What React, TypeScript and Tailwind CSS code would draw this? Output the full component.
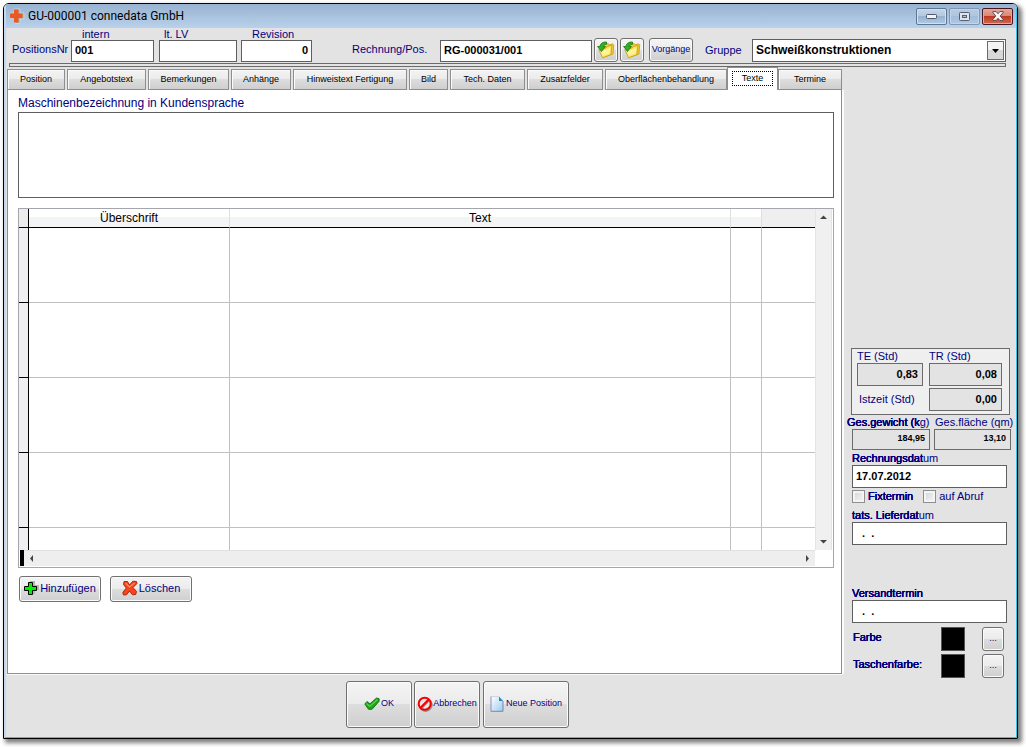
import React from "react";

const FIELD =
  "block rounded-none border border-[#5f5f5f] bg-white px-[3px] font-bold text-black outline-none";
const READONLY =
  "block w-full rounded-none border border-[#6b6b6b] bg-[#e3e3e3] font-bold text-black text-right outline-none";
const LABEL = "whitespace-nowrap text-[11px] text-[#000080]";
const STRONG = "[text-shadow:0_0_0_#000080,0_0_0_#000080,0_0_0_#000080]";
const BUTTON =
  "flex items-center justify-center whitespace-nowrap rounded-[3px] border border-[#707070] bg-[linear-gradient(#f4f4f4_0%,#ebebeb_49%,#dddddd_50%,#cfcfcf_100%)] text-[#000080] shadow-[inset_0_0_0_1px_#fbfbfb]";

const TABS = [
  { name: "Position", size: "w-[58px] mr-[2px]" },
  { name: "Angebotstext", size: "w-[79px] mr-[2px]" },
  { name: "Bemerkungen", size: "w-[81px] mr-[2px]" },
  { name: "Anhänge", size: "w-[60px] mr-[2px]" },
  { name: "Hinweistext Fertigung", size: "w-[114px] mr-[2px]" },
  { name: "Bild", size: "w-[39px] mr-[2px]" },
  { name: "Tech. Daten", size: "w-[75px] mr-[2px]" },
  { name: "Zusatzfelder", size: "w-[76px] mr-[2px]" },
  { name: "Oberflächenbehandlung", size: "w-[122px]" },
  { name: "Texte", size: "w-[51px]", active: true },
  { name: "Termine", size: "w-[64px]" },
];

function AppIcon() {
  return (
    <svg width="16" height="16" viewBox="0 0 16 16" aria-hidden="true">
      <path d="M5 1h6v4h4v6h-4v4.500H6V11H1.500V5H5z" fill="#b3aeab" stroke="#cfd8e2" strokeWidth=".8" />
      <path d="M5 1.500h4.500v4h4V10h-4v4.500H5V10H1V5.500h4z" fill="#ea5a20" />
    </svg>
  );
}

function FolderIcon() {
  return (
    <svg width="18" height="18" viewBox="0 0 18 18" aria-hidden="true">
      <path d="M7 4.500 8 2.500l3.500.3.500 1.200 3.500-1.200 1.200 1-.7 9.200L7 16z" fill="#f0cf3c" stroke="#c8981c" strokeWidth=".8" />
      <path d="M1.800 8.500 9 7l1.200-1.500L15 4.300l-1.200 9.400L5.500 16.800z" fill="#fbe45c" stroke="#c8981c" strokeWidth=".8" />
      <path d="M4 10l9.500-3-.8 5.500-7 2.500z" fill="#fff9b0" opacity=".7" />
      <path d="M9.500 1C6 .8 3.300 2.300 2.800 5.500H.6L4.500 10.500 8.400 5.500H6.300c.3-1.300 1.200-2.200 3.200-2.200z" fill="#35b024" stroke="#16770f" strokeWidth=".8" />
    </svg>
  );
}

function PlusIcon() {
  return (
    <svg width="15" height="15" viewBox="0 0 15 15" aria-hidden="true">
      <path d="M6 0h5v4h4v5h-4v4H6z" fill="#b5b5b5" />
      <path d="M4.500 1.500h4v4h4v4h-4v4h-4v-4h-4v-4h4z" fill="#00f000" stroke="#000" />
    </svg>
  );
}

function CrossIcon() {
  return (
    <svg width="16" height="16" viewBox="0 0 16 16" aria-hidden="true">
      <path
        d="M2 1.500h3.500L7.500 5l3.300-3.800 3.700.3.500 2-4 4 3.500 4-.8 3-3.200.3-3-3.800-3 3.800-3 .2L.8 12.500 4.300 8 1.500 4.500z"
        fill="#f4461c"
        stroke="#a81a08"
        strokeWidth=".9"
      />
      <path d="M3.500 3l4 4 5-4" fill="none" stroke="#ff8a5c" strokeWidth="1.200" />
    </svg>
  );
}

function CheckIcon() {
  return (
    <svg width="16" height="14" viewBox="0 0 16 14" aria-hidden="true">
      <path d="M.8 7 3 4.500l3 2.300L12.500 1l2.700.8-.2 2.700L8 12.300H4.500z" fill="#1fa51a" stroke="#0e7011" strokeWidth=".9" />
      <path d="M2.500 6.500l3.300 2.800L13.500 2.500" fill="none" stroke="#65d64e" strokeWidth="1.100" />
    </svg>
  );
}

function ForbiddenIcon() {
  return (
    <svg width="16" height="16" viewBox="0 0 16 16" aria-hidden="true">
      <circle cx="8.600" cy="8.800" r="6" fill="none" stroke="#8c8c8c" strokeWidth="2.200" />
      <circle cx="7.700" cy="7.700" r="6" fill="#e6e6e6" stroke="#f50000" strokeWidth="2" />
      <path d="m4.600 12.200 7.400-7.600" stroke="#888" strokeWidth="1.800" />
      <path d="m3.800 11.500 7.600-7.700" stroke="#f50000" strokeWidth="2" />
    </svg>
  );
}

function PageIcon() {
  return (
    <svg width="14" height="16" viewBox="0 0 14 16" aria-hidden="true">
      <defs>
        <linearGradient id="sheet" x1="0" y1="0" x2="1" y2="1">
          <stop offset="0" stopColor="#ffffff" />
          <stop offset="1" stopColor="#9ccbec" />
        </linearGradient>
      </defs>
      <path d="M1 .8h8L13 5v10.300H1z" fill="url(#sheet)" />
      <path d="M1 .5v15" stroke="#8d8bd0" />
      <path d="M1 15.300h12V5" fill="none" stroke="#5f86ad" strokeWidth=".9" />
      <path d="M9 .6 13.200 5H9z" fill="#2f86c4" />
      <path d="M1 .6h8" stroke="#b9c8d8" strokeWidth=".7" />
    </svg>
  );
}

function Arrow({ path }: { path: string }) {
  return (
    <svg width="7" height="7" viewBox="0 0 7 7" aria-hidden="true">
      <path d={path} fill="#444" />
    </svg>
  );
}

function TitleBar() {
  const control = "flex h-[17px] w-[31px] items-center justify-center rounded-[2px] border";
  return (
    <header className="flex h-6 items-center bg-[linear-gradient(#98b3d1,#b9d1ea)] pl-[3px] pr-[3px]">
      <AppIcon />
      <h1 className="ml-[3px] flex-1 font-['Roboto',sans-serif] text-[12px] leading-4 text-black">
        GU-000001 connedata GmbH
      </h1>
      <div className="flex gap-[2px]">
        <button
          aria-label="Minimieren"
          className={`${control} border-[#5f7690] bg-[linear-gradient(#c3d5e8_0%,#b3c9e0_49%,#97b2cf_50%,#b0cbe6_100%)] shadow-[inset_0_0_0_1px_#d2e1f0]`}
        >
          <svg width="12" height="6" viewBox="0 0 12 6">
            <rect x=".5" y="1.500" width="10" height="4" rx=".8" fill="#f3f3f3" stroke="#50586a" />
          </svg>
        </button>
        <button
          aria-label="Maximieren"
          className={`${control} border-[#7d97b5] bg-[linear-gradient(#b7cce2_0%,#adc5de_49%,#a2bcd9_50%,#b0cae5_100%)] shadow-[inset_0_0_0_1px_#c2d5e9]`}
        >
          <svg width="11" height="9" viewBox="0 0 11 9">
            <rect x=".5" y=".5" width="10" height="8" rx=".8" fill="#dfe4ea" stroke="#566070" />
            <rect x="3.500" y="3.500" width="4" height="2" fill="#a9c1da" stroke="#566070" />
          </svg>
        </button>
        <button
          aria-label="Schließen"
          className={`${control} border-[#4a1620] bg-[linear-gradient(#e6a597_0%,#d98574_49%,#bd3a22_50%,#cf6a50_100%)] shadow-[inset_0_0_0_1px_#e6a799]`}
        >
          <svg width="12" height="10" viewBox="0 0 12 10">
            <path
              d="M.8.600h3.400L6 2.700 7.800.600h3.400v.9L8.200 5l3 3.500v.9H7.800L6 7.300 4.200 9.400H.8v-.9L3.800 5l-3-3.500z"
              fill="#f4f4f4"
              stroke="#563a45"
              strokeWidth=".9"
            />
          </svg>
        </button>
      </div>
    </header>
  );
}

function HeaderFields() {
  return (
    <div className="flex items-end pb-px pl-[6px] pr-[10px]">
      <span className={`${LABEL} w-[59px] pb-[5px] leading-4`}>PositionsNr</span>
      <div className="mr-[5px] w-[83px]">
        <label htmlFor="intern" className={`${LABEL} block pl-[11px] leading-3`}>intern</label>
        <input id="intern" defaultValue="001" className={`${FIELD} h-[22px] w-full pb-[2px] text-[11px]`} />
      </div>
      <div className="mr-[4px] w-[78px]">
        <label htmlFor="lv" className={`${LABEL} block pl-[5px] leading-3`}>lt. LV</label>
        <input id="lv" className={`${FIELD} h-[22px] w-full pb-[2px] text-[11px]`} />
      </div>
      <div className="w-[71px]">
        <label htmlFor="revision" className={`${LABEL} block pl-[11px] leading-3`}>Revision</label>
        <input id="revision" defaultValue="0" className={`${FIELD} h-[22px] w-full pb-[2px] text-right text-[11px]`} />
      </div>
      <label htmlFor="rechnung" className={`${LABEL} ml-10 w-[88px] pb-[5px] leading-4`}>Rechnung/Pos.</label>
      <input id="rechnung" defaultValue="RG-000031/001" className={`${FIELD} h-[22px] w-[152px] pb-[2px] text-[11px]`} />
      <div className="ml-[2px] flex gap-[2px]">
        <button aria-label="Rechnung öffnen" className={`${BUTTON} h-6 w-6`}><FolderIcon /></button>
        <button aria-label="Position öffnen" className={`${BUTTON} h-6 w-6`}><FolderIcon /></button>
      </div>
      <button className={`${BUTTON} ml-[5px] h-6 w-11 text-[9px]`}>Vorgänge</button>
      <label htmlFor="gruppe" className={`${LABEL} ml-3 w-[47px] pb-1 leading-4`}>Gruppe</label>
      <div className="relative flex-1">
        <select id="gruppe" className={`${FIELD} h-[23px] w-full appearance-none pb-[2px] text-[12px]`}>
          <option>Schweißkonstruktionen</option>
        </select>
        <span className="pointer-events-none absolute bottom-[2px] right-[2px] top-[2px] flex w-[17px] items-center justify-center border border-[#6b6b6b] bg-[linear-gradient(#f4f4f4_50%,#d8d8d8_50%)]">
          <svg width="7" height="4" viewBox="0 0 7 4"><path d="M0 0h7L3.500 4z" fill="#000" /></svg>
        </span>
      </div>
    </div>
  );
}

function TabStrip() {
  return (
    <div role="tablist" className="flex h-[23px] items-end">
      {TABS.map((tab) => (
        <button
          key={tab.name}
          role="tab"
          aria-selected={!!tab.active}
          className={`flex items-center justify-center whitespace-nowrap border border-[#8c8e94] text-[9px] text-black ${tab.size} ${
            tab.active
              ? "h-[23px] border-b-0 bg-white"
              : "h-[21px] bg-[linear-gradient(#f3f3f3_0%,#ebebeb_49%,#dddddd_50%,#cfcfcf_100%)] shadow-[inset_1px_1px_0_#fbfbfb]"
          }`}
        >
          {tab.active ? (
            <span className="mb-px flex h-[15px] w-[41px] items-center justify-center border border-dotted border-black">{tab.name}</span>
          ) : (
            tab.name
          )}
        </button>
      ))}
    </div>
  );
}

const HEAD_CELL =
  "h-[19px] border-b border-r border-b-black border-r-[#dedfe1] bg-[linear-gradient(#ffffff_45%,#f3f4f6_45%)] p-0 text-[12px] font-normal leading-4 text-black";

function TextGrid() {
  const rows = ["h-[75px]", "h-[75px]", "h-[75px]", "h-[75px]", "h-[22px]"];
  return (
    <div className="mt-[10px] border border-[#a5a5ad]">
      <div className="flex">
        <table className="flex-1 table-fixed border-separate border-spacing-0">
          <colgroup>
            <col className="w-[10px]" />
            <col className="w-[201px]" />
            <col />
            <col className="w-[31px]" />
            <col className="w-[53px]" />
          </colgroup>
          <thead>
            <tr>
              <th className="h-[19px] border-b border-r border-black bg-[#ececec] p-0" />
              <th className={HEAD_CELL}>Überschrift</th>
              <th className={HEAD_CELL}>Text</th>
              <th className={HEAD_CELL} />
              <th className="border-b border-black bg-[#efefef] p-0" />
            </tr>
          </thead>
          <tbody>
            {rows.map((height, i) => {
              const last = i === rows.length - 1;
              const line = last ? "" : "border-b";
              return (
                <tr key={i} className={height}>
                  <td className={`border-r border-black bg-[#efefef] p-0 ${line}`} />
                  <td className={`border-r border-[#c0c0c0] p-0 ${line}`} />
                  <td className={`border-r border-[#c0c0c0] p-0 ${line}`} />
                  <td className={`border-r border-[#c0c0c0] p-0 ${line}`} />
                  <td className={`border-[#c0c0c0] p-0 ${line}`} />
                </tr>
              );
            })}
          </tbody>
        </table>
        <div className="mr-px flex w-[17px] flex-col items-center justify-between border-x border-[#e4e4e4] bg-[#f0f0f0] py-[5px]">
          <Arrow path="M0 5h7L3.500 1.500z" />
          <Arrow path="M0 2h7L3.500 5.500z" />
        </div>
      </div>
      <div className="flex h-[17px] pb-px pl-px pr-[18px]">
        <span className="w-1 bg-black" />
        <div className="flex flex-1 items-center justify-between border-t border-[#e0e0e0] bg-[#eeeeee] px-[4px]">
          <Arrow path="M5 0v7L2 3.500z" />
          <Arrow path="M2 0v7l3-3.500z" />
        </div>
      </div>
    </div>
  );
}

function TextsPanel() {
  return (
    <section className="flex-1 border border-t-0 border-[#8c8e94] bg-white pl-[10px] pr-[7px] pt-[5px] shadow-[2px_0_0_#fbfbfb,0_1px_0_#fbfbfb]">
      <label htmlFor="bezeichnung" className="block text-[12px] leading-4 text-[#000080]">
        Maschinenbezeichnung in Kundensprache
      </label>
      <textarea id="bezeichnung" className="mt-px block h-[86px] w-full resize-none border border-[#5f5f5f] bg-white outline-none" />
      <TextGrid />
      <div className="mt-2 flex gap-[9px] pl-px">
        <button className={`${BUTTON} h-[26px] w-[82px] gap-px pb-[2px] text-[11px]`}><PlusIcon />Hinzufügen</button>
        <button className={`${BUTTON} h-[26px] w-[82px] gap-px pb-[2px] text-[11px]`}><CrossIcon />Löschen</button>
      </div>
    </section>
  );
}

function DateField({ id, label, tail, value }: { id: string; label: string; tail: string; value: string }) {
  return (
    <div className="ml-[5px] w-[155px]">
      <label htmlFor={id} className={`${LABEL} block leading-[14px]`}>
        <span className={STRONG}>{label}</span>{tail}
      </label>
      <input id={id} defaultValue={value} className={`${FIELD} h-[23px] w-full pb-[2px] text-[11px]`} />
    </div>
  );
}

function CheckField({ id, label, strong }: { id: string; label: string; strong?: boolean }) {
  return (
    <div className="flex items-center gap-[3px]">
      <input
        id={id}
        type="checkbox"
        className="h-[13px] w-[13px] appearance-none border border-[#8e8f8f] bg-[linear-gradient(135deg,#d0d4d8,#f6f6f6)] shadow-[inset_0_0_0_2px_#f4f4f4] checked:bg-[#000080]"
      />
      <label htmlFor={id} className={`${LABEL} leading-[14px] ${strong ? STRONG : ""}`}>{label}</label>
    </div>
  );
}

function ColorRow({ label }: { label: string }) {
  return (
    <div className="ml-[6px] flex h-[25px] items-center">
      <span className={`${LABEL} ${STRONG} w-[88px] pb-[3px]`}>{label}</span>
      <span className="h-6 w-6 border border-[#555] bg-black" />
      <button aria-label={`${label} wählen`} className={`${BUTTON} ml-[17px] h-6 w-[22px] text-[9px]`}>...</button>
    </div>
  );
}

function Sidebar() {
  return (
    <aside className="-mb-1 w-[174px] pl-[5px] pt-[281px]">
      <div className="ml-1 grid w-[159px] grid-cols-[66px_73px] gap-x-[6px] border border-[#6b6b6b] bg-[#efefef] pb-[3px] pl-[5px]">
        <label htmlFor="te" className={`${LABEL} leading-[14px]`}>TE (Std)</label>
        <label htmlFor="tr" className={`${LABEL} leading-[14px]`}>TR (Std)</label>
        <input id="te" readOnly value="0,83" className={`${READONLY} h-[23px] px-1 pb-[2px] text-[11px]`} />
        <input id="tr" readOnly value="0,08" className={`${READONLY} h-[23px] px-1 pb-[2px] text-[11px]`} />
        <label htmlFor="ist" className={`${LABEL} mt-[2px] pl-[2px] leading-[23px]`}>Istzeit (Std)</label>
        <input id="ist" readOnly value="0,00" className={`${READONLY} mt-[2px] h-[23px] px-1 pb-[2px] text-[11px]`} />
      </div>
      <div className="mb-px grid grid-cols-[83px_77px] gap-x-1">
        <label htmlFor="gewicht" className={`${LABEL} leading-[14px]`}><span className={STRONG}>Ges.gewicht (k</span>g)</label>
        <label htmlFor="flaeche" className={`${LABEL} pl-px leading-[14px]`}>Ges.fläche (qm)</label>
        <div className="pl-[5px]">
          <input id="gewicht" readOnly value="184,95" className={`${READONLY} h-[21px] px-1 pb-[3px] text-[9px]`} />
        </div>
        <input id="flaeche" readOnly value="13,10" className={`${READONLY} h-[21px] px-1 pb-[3px] text-[9px]`} />
      </div>
      <DateField id="rdatum" label="Rechnungsdat" tail="um" value="17.07.2012" />
      <div className="mb-[5px] ml-[5px] mt-px flex gap-[10px]">
        <CheckField id="fix" label="Fixtermin" strong />
        <CheckField id="abruf" label="auf Abruf" />
      </div>
      <DateField id="liefer" label="tats. Lieferdat" tail="um" value="  .  ." />
      <div className="mb-[3px] mt-[41px]">
        <DateField id="versand" label="Versandtermin" tail="" value="  .  ." />
      </div>
      <div className="flex flex-col gap-[2px]">
        <ColorRow label="Farbe" />
        <ColorRow label="Taschenfarbe:" />
      </div>
    </aside>
  );
}

export default function App() {
  return (
    <div className="flex min-h-screen bg-white pb-2 pl-[3px] pr-2 pt-[3px] font-['Liberation_Sans',Arial,sans-serif]">
      <div className="flex flex-1 overflow-hidden rounded-t-[6px] border border-black shadow-[3px_3px_4px_1px_rgba(0,0,0,0.5)]">
        <main className="flex flex-1 flex-col border-b border-l-2 border-r border-b-[#35c3e8] border-l-[#c3d9ee] border-r-[#35c3e8] bg-[#e3e3e3]">
          <TitleBar />
          <HeaderFields />
          <div className="ml-[3px] mr-[10px] h-1 border border-[#6b6b6b]" />
          <div className="flex flex-1 pl-px">
            <div className="flex flex-1 flex-col">
              <TabStrip />
              <TextsPanel />
            </div>
            <Sidebar />
          </div>
          <footer className="flex items-start gap-[2px] pb-[9px] pl-[340px] pt-[7px]">
            <button className={`${BUTTON} h-[47px] w-[66px] gap-px pb-[2px] text-[9px]`}><CheckIcon />OK</button>
            <button className={`${BUTTON} h-[47px] w-[66px] pb-[2px] text-[9px]`}><ForbiddenIcon />Abbrechen</button>
            <button className={`${BUTTON} ml-px h-[47px] w-[86px] gap-[2px] pb-[2px] text-[9px]`}><PageIcon />Neue Position</button>
          </footer>
        </main>
      </div>
    </div>
  );
}
